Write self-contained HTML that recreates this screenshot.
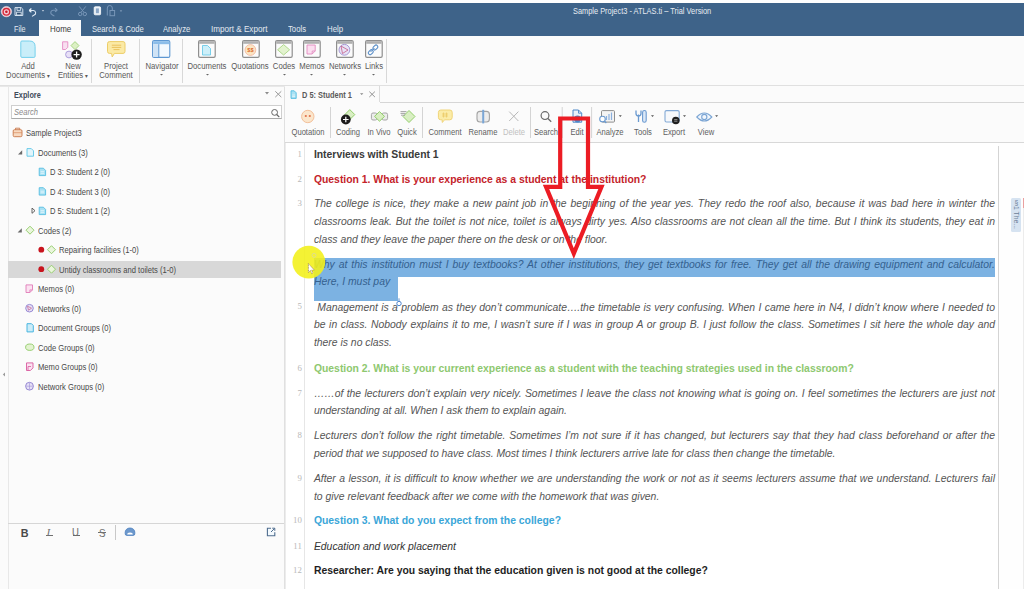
<!DOCTYPE html>
<html><head><meta charset="utf-8">
<style>
*{margin:0;padding:0;box-sizing:border-box}
html,body{width:1024px;height:589px;overflow:hidden;background:#fbfbfb;font-family:"Liberation Sans",sans-serif;position:relative}
.a{position:absolute}
svg.a{overflow:visible}
.t{position:absolute;white-space:pre;line-height:1}
.tab{color:#e3e9f0}
.rl{color:#585858}
.tr{color:#484848}
.tb{color:#505050}
.p{position:absolute;left:314px;width:681px;font-size:10.4px;white-space:nowrap;line-height:1}
.i{font-style:italic;color:#505050}
.j{text-align:justify;text-align-last:justify;white-space:normal}
</style></head><body>
<div class="a" style="left:0px;top:0px;width:1024px;height:3px;background:#fefefe"></div>
<div class="a" style="left:0px;top:3px;width:1024px;height:33px;background:#3e6389"></div>
<div class="a" style="left:39px;top:20px;width:42px;height:16px;background:#fbfbfb"></div>
<div class="t tab" style="left:13.80px;top:24.94px;font-size:8.4px;transform:scaleX(0.86);transform-origin:0 0;">File</div>
<div class="t tab" style="left:91.50px;top:24.94px;font-size:8.4px;transform:scaleX(0.913);transform-origin:0 0;">Search &amp; Code</div>
<div class="t tab" style="left:163.20px;top:24.94px;font-size:8.4px;transform:scaleX(0.914);transform-origin:0 0;">Analyze</div>
<div class="t tab" style="left:211.00px;top:24.94px;font-size:8.4px;transform:scaleX(0.97);transform-origin:0 0;">Import &amp; Export</div>
<div class="t tab" style="left:288.20px;top:24.94px;font-size:8.4px;transform:scaleX(0.92);transform-origin:0 0;">Tools</div>
<div class="t tab" style="left:326.70px;top:24.94px;font-size:8.4px;transform:scaleX(0.943);transform-origin:0 0;">Help</div>
<div class="t " style="left:49.80px;top:24.79px;font-size:8.6px;transform:scaleX(0.925);transform-origin:0 0;color:#383838">Home</div>
<div class="t " style="left:573.00px;top:8.49px;font-size:8.2px;transform:scaleX(0.905);transform-origin:0 0;color:#e8edf3">Sample Project3 - ATLAS.ti – Trial Version</div>
<svg class="a" style="left:0px;top:0px" width="130" height="20" viewBox="0 0 130 20">
<circle cx="6.4" cy="11.6" r="5.2" fill="#f2cdd6" stroke="#f7e6ea" stroke-width="0.6"/>
<circle cx="6.4" cy="11.8" r="3.3" fill="none" stroke="#d62a3c" stroke-width="1.4"/>
<circle cx="6.4" cy="11.8" r="1.3" fill="#c81828"/>
<path d="M15 7.6h6.2l1.6 1.6v6.3h-7.8z" fill="none" stroke="#d8e4f0" stroke-width="1"/>
<path d="M17 7.8v2.6h3.6V7.8" fill="none" stroke="#d8e4f0" stroke-width="0.9"/>
<rect x="16.6" y="12.2" width="4.6" height="2.8" fill="#2c4a6c" stroke="#d8e4f0" stroke-width="0.9"/>
<path d="M29.2 10.5 h4.2 a2.4 2.4 0 0 1 0.8 4.6 l-2.2 1.3" fill="none" stroke="#dfe9f4" stroke-width="1.1"/>
<path d="M29.2 10.5 l2.2 -2 M29.2 10.5 l2.2 1.7" fill="none" stroke="#e8f2fa" stroke-width="1.2"/>
<path d="M41.8 10.2 h2.4 l-1.2 1.3z" fill="#e0e9f3"/>
<path d="M57.2 10.2 h-4.2 a2.4 2.4 0 0 0 -0.8 4.6 l2.2 1.3" fill="none" stroke="#7896b8" stroke-width="1.1"/>
<path d="M57.2 10.2 l-2.2 -2 M57.2 10.2 l-2.2 1.7" fill="none" stroke="#7896b8" stroke-width="1.1"/>
<path d="M79.2 6.4 l4.8 6 M85.8 6.4 l-4.8 6" stroke="#7896b8" stroke-width="1"/>
<circle cx="80.2" cy="14" r="1.7" fill="none" stroke="#7896b8" stroke-width="1"/>
<circle cx="84.8" cy="14" r="1.7" fill="none" stroke="#7896b8" stroke-width="1"/>
<rect x="94.2" y="6.8" width="6.4" height="8" rx="1" fill="#e9f0f7" stroke="#fff" stroke-width="0.8"/>
<rect x="95.9" y="8.4" width="3" height="4.8" fill="#8aa6c6"/>
<path d="M107.3 15.5 V8 a2.5 2.5 0 0 1 5 0 V10" fill="none" stroke="#7896b8" stroke-width="1"/>
<rect x="110" y="10.5" width="4.6" height="5.2" fill="none" stroke="#7896b8" stroke-width="1"/>
<path d="M119.8 10.4 h2.4 l-1.2 1.3z" fill="#9fb5cf"/>
</svg>
<div class="a" style="left:0px;top:36px;width:1024px;height:49px;background:#fbfbfb"></div>
<div class="a" style="left:0px;top:85px;width:1024px;height:1px;background:#e0e0e0"></div>
<div class="a" style="left:91px;top:39px;width:1px;height:44px;background:#d8d8d8"></div>
<div class="a" style="left:139px;top:39px;width:1px;height:44px;background:#d8d8d8"></div>
<div class="a" style="left:182px;top:39px;width:1px;height:44px;background:#d8d8d8"></div>
<div class="a" style="left:386px;top:39px;width:1px;height:44px;background:#d8d8d8"></div>
<div class="t rl" style="left:-32.00px;top:61.54px;width:120px;text-align:center;font-size:8.4px;transform:scaleX(0.92);transform-origin:50% 0;">Add</div>
<div class="t rl" style="left:-32.00px;top:71.34px;width:120px;text-align:center;font-size:8.4px;transform:scaleX(0.92);transform-origin:50% 0;">Documents <span style="font-size:6px">▾</span></div>
<div class="t rl" style="left:12.50px;top:61.54px;width:120px;text-align:center;font-size:8.4px;transform:scaleX(0.92);transform-origin:50% 0;">New</div>
<div class="t rl" style="left:12.50px;top:71.34px;width:120px;text-align:center;font-size:8.4px;transform:scaleX(0.92);transform-origin:50% 0;">Entities <span style="font-size:6px">▾</span></div>
<div class="t rl" style="left:56.00px;top:61.54px;width:120px;text-align:center;font-size:8.4px;transform:scaleX(0.92);transform-origin:50% 0;">Project</div>
<div class="t rl" style="left:56.00px;top:71.34px;width:120px;text-align:center;font-size:8.4px;transform:scaleX(0.92);transform-origin:50% 0;">Comment</div>
<div class="t rl" style="left:101.50px;top:61.54px;width:120px;text-align:center;font-size:8.4px;transform:scaleX(0.92);transform-origin:50% 0;">Navigator</div>
<svg class="a" style="left:160.0px;top:74.3px" width="3" height="2" viewBox="0 0 3 2"><path d="M0 0h3l-1.5 1.6z" fill="#666"/></svg>
<div class="t rl" style="left:147.20px;top:61.54px;width:120px;text-align:center;font-size:8.4px;transform:scaleX(0.92);transform-origin:50% 0;">Documents</div>
<svg class="a" style="left:205.7px;top:74.3px" width="3" height="2" viewBox="0 0 3 2"><path d="M0 0h3l-1.5 1.6z" fill="#666"/></svg>
<div class="t rl" style="left:190.00px;top:61.54px;width:120px;text-align:center;font-size:8.4px;transform:scaleX(0.92);transform-origin:50% 0;">Quotations</div>
<div class="t rl" style="left:224.00px;top:61.54px;width:120px;text-align:center;font-size:8.4px;transform:scaleX(0.92);transform-origin:50% 0;">Codes</div>
<svg class="a" style="left:282.5px;top:74.3px" width="3" height="2" viewBox="0 0 3 2"><path d="M0 0h3l-1.5 1.6z" fill="#666"/></svg>
<div class="t rl" style="left:251.80px;top:61.54px;width:120px;text-align:center;font-size:8.4px;transform:scaleX(0.92);transform-origin:50% 0;">Memos</div>
<svg class="a" style="left:310.3px;top:74.3px" width="3" height="2" viewBox="0 0 3 2"><path d="M0 0h3l-1.5 1.6z" fill="#666"/></svg>
<div class="t rl" style="left:284.50px;top:61.54px;width:120px;text-align:center;font-size:8.4px;transform:scaleX(0.92);transform-origin:50% 0;">Networks</div>
<svg class="a" style="left:343.0px;top:74.3px" width="3" height="2" viewBox="0 0 3 2"><path d="M0 0h3l-1.5 1.6z" fill="#666"/></svg>
<div class="t rl" style="left:313.80px;top:61.54px;width:120px;text-align:center;font-size:8.4px;transform:scaleX(0.92);transform-origin:50% 0;">Links</div>
<svg class="a" style="left:372.3px;top:74.3px" width="3" height="2" viewBox="0 0 3 2"><path d="M0 0h3l-1.5 1.6z" fill="#666"/></svg>
<svg class="a" style="left:0px;top:0px" width="400" height="90" viewBox="0 0 400 90">
<!-- add documents -->
<path d="M22 41 h7.5 q5.6 0 5.6 5.6 v9.6 q0 1.2 -1.2 1.2 h-11.9 q-1.2 0 -1.2 -1.2 v-14 q0 -1.2 1.2 -1.2z" fill="#c9eef9" stroke="#74d0ec" stroke-width="1"/>
<!-- new entities -->
<path d="M62.6 41.8 h5.2 v5.5 l-2.2 2.2 h-3z" fill="#f8dff0" stroke="#e58ac4" stroke-width="0.9"/>
<path d="M75 41.6 l4 4 -4 4 -4 -4z" fill="#dcf0c4" stroke="#9fd07a" stroke-width="0.9"/>
<circle cx="69" cy="54.5" r="3.4" fill="#e8e0f6" stroke="#a596d8" stroke-width="0.9"/>
<circle cx="76.6" cy="54.6" r="5.2" fill="#1e1e1e"/>
<path d="M76.6 51.6 v6 M73.6 54.6 h6" stroke="#fff" stroke-width="1.3"/>
<!-- project comment -->
<path d="M109.5 41.6 h13.5 a2 2 0 0 1 2 2 v7.8 a2 2 0 0 1 -2 2 h-8.6 l-2.2 3.6 -.6 -3.6 h-2.1 a2 2 0 0 1 -2 -2 v-7.8 a2 2 0 0 1 2 -2z" fill="#fbeaa6" stroke="#eccd68" stroke-width="1"/>
<path d="M111.8 45.2 h9.4 M111.8 47.4 h9.4 M113.5 49.6 h6" stroke="#e6b84a" stroke-width="0.8"/>
<!-- navigator -->
<rect x="152.6" y="40.6" width="17.2" height="16.8" rx="1.5" fill="#f4f9fe" stroke="#5d97d2" stroke-width="1.1"/>
<rect x="153.2" y="41.2" width="16" height="3" fill="#8cbde9"/>
<rect x="153.2" y="44.2" width="5.5" height="12.6" fill="#cfe3f6"/>
<path d="M158.8 44.2 v13" stroke="#5d97d2" stroke-width="1"/>
<rect x="198.6" y="40.6" width="16.6" height="16.8" rx="1.4" fill="#fbfbfb" stroke="#8f8f8f" stroke-width="1.2"/>
<rect x="199.2" y="41.2" width="15.4" height="2.6" fill="#b0b0b0"/><path d="M202.5 45.5 h5 l3 3 v6.5 h-8z" fill="#cdeff9" stroke="#6ccbe8" stroke-width="0.9"/><rect x="242.6" y="40.6" width="16.6" height="16.8" rx="1.4" fill="#fbfbfb" stroke="#8f8f8f" stroke-width="1.2"/>
<rect x="243.2" y="41.2" width="15.4" height="2.6" fill="#b0b0b0"/><circle cx="250.4" cy="50" r="5.4" fill="#fbe6c4" stroke="#f2b49a" stroke-width="0.8"/><text x="250.4" y="52.2" font-size="5.6" text-anchor="middle" fill="#dc6a30" font-family="Liberation Sans" font-weight="bold">$$</text><rect x="275.6" y="40.6" width="16.6" height="16.8" rx="1.4" fill="#fbfbfb" stroke="#8f8f8f" stroke-width="1.2"/>
<rect x="276.2" y="41.2" width="15.4" height="2.6" fill="#b0b0b0"/><path d="M283.6 44.6 l6 5.2 -6 5.2 -6 -5.2z" fill="#e3f3cf" stroke="#a9d585" stroke-width="0.9"/><rect x="303.6" y="40.6" width="16.6" height="16.8" rx="1.4" fill="#fbfbfb" stroke="#8f8f8f" stroke-width="1.2"/>
<rect x="304.2" y="41.2" width="15.4" height="2.6" fill="#b0b0b0"/><path d="M307 45 h8.2 v6 l-3 3 h-5.2z" fill="#fbdff0" stroke="#e28bc0" stroke-width="0.9"/><path d="M312.2 54 v-3 h3" fill="none" stroke="#e28bc0" stroke-width="0.8"/><rect x="336.6" y="40.6" width="16.6" height="16.8" rx="1.4" fill="#fbfbfb" stroke="#8f8f8f" stroke-width="1.2"/>
<rect x="337.2" y="41.2" width="15.4" height="2.6" fill="#b0b0b0"/><circle cx="344.4" cy="49.8" r="5.4" fill="#e7e3f6" stroke="#9d8fd0" stroke-width="0.9"/><path d="M341 46 l1.5 7.5 M341 46 l7 4 M342.5 53.5 l5.5 -3.5" stroke="#c04a7a" stroke-width="0.7" fill="none"/><rect x="365.6" y="40.6" width="16.6" height="16.8" rx="1.4" fill="#fbfbfb" stroke="#8f8f8f" stroke-width="1.2"/>
<rect x="366.2" y="41.2" width="15.4" height="2.6" fill="#b0b0b0"/><path d="M370.5 52 l4 -4" stroke="#5b8fc8" stroke-width="1"/><rect x="369" y="49.5" width="3.6" height="5.5" rx="1.8" transform="rotate(45 370.8 52.2)" fill="none" stroke="#5b8fc8" stroke-width="1.1"/><rect x="373.6" y="44.8" width="3.6" height="5.5" rx="1.8" transform="rotate(45 375.4 47.5)" fill="none" stroke="#5b8fc8" stroke-width="1.1"/></svg>
<div class="a" style="left:8px;top:86px;width:277px;height:503px;background:#fbfbfb;border-left:1px solid #e8e8e8;border-right:1px solid #e0e0e0"></div>
<div class="a" style="left:0px;top:86px;width:1024px;height:1px;background:#e8e8e8"></div>
<div class="t " style="left:13.90px;top:91.44px;font-size:8.4px;transform:scaleX(0.87);transform-origin:0 0;font-weight:bold;color:#3f4b5a">Explore</div>
<svg class="a" style="left:265.4px;top:92.4px" width="4.2" height="3" viewBox="0 0 4.2 3"><path d="M0 0h4l-2 2.4z" fill="#8c8c8c"/></svg>
<svg class="a" style="left:274.6px;top:91.2px" width="7" height="6.5" viewBox="0 0 7 6.5"><path d="M0.3 0.3l6 5.8M6.3 0.3l-6 5.8" stroke="#999" stroke-width="1"/></svg>
<div class="a" style="left:11px;top:105px;width:271px;height:14px;background:#fff;border:1px solid #cfcfcf;border-bottom-color:#a9a9a9"></div>
<div class="t " style="left:14.30px;top:108.14px;font-size:8.4px;transform:scaleX(0.9);transform-origin:0 0;font-style:italic;color:#8a8a8a">Search</div>
<svg class="a" style="left:270.5px;top:109px" width="9" height="8" viewBox="0 0 9 8"><circle cx="3.6" cy="3.4" r="2.9" fill="none" stroke="#666" stroke-width="1"/><path d="M5.7 5.5l2.6 2.6" stroke="#666" stroke-width="1.2"/></svg>
<div class="a" style="left:8px;top:261px;width:273px;height:17px;background:#d8d8d8"></div>
<div class="t tr" style="left:25.60px;top:129.19px;font-size:8.6px;transform:scaleX(0.885);transform-origin:0 0;">Sample Project3</div>
<div class="t tr" style="left:37.80px;top:148.69px;font-size:8.6px;transform:scaleX(0.885);transform-origin:0 0;">Documents (3)</div>
<div class="t tr" style="left:50.00px;top:168.19px;font-size:8.6px;transform:scaleX(0.885);transform-origin:0 0;">D 3: Student 2 (0)</div>
<div class="t tr" style="left:50.00px;top:187.69px;font-size:8.6px;transform:scaleX(0.885);transform-origin:0 0;">D 4: Student 3 (0)</div>
<div class="t tr" style="left:50.00px;top:207.19px;font-size:8.6px;transform:scaleX(0.885);transform-origin:0 0;">D 5: Student 1 (2)</div>
<div class="t tr" style="left:37.80px;top:226.69px;font-size:8.6px;transform:scaleX(0.885);transform-origin:0 0;">Codes (2)</div>
<div class="t tr" style="left:59.30px;top:246.19px;font-size:8.6px;transform:scaleX(0.885);transform-origin:0 0;">Repairing facilities (1-0)</div>
<div class="t tr" style="left:59.30px;top:265.69px;font-size:8.6px;transform:scaleX(0.885);transform-origin:0 0;">Untidy classrooms and toilets (1-0)</div>
<div class="t tr" style="left:37.60px;top:285.19px;font-size:8.6px;transform:scaleX(0.885);transform-origin:0 0;">Memos (0)</div>
<div class="t tr" style="left:37.60px;top:304.69px;font-size:8.6px;transform:scaleX(0.885);transform-origin:0 0;">Networks (0)</div>
<div class="t tr" style="left:37.60px;top:324.19px;font-size:8.6px;transform:scaleX(0.885);transform-origin:0 0;">Document Groups (0)</div>
<div class="t tr" style="left:37.60px;top:343.69px;font-size:8.6px;transform:scaleX(0.885);transform-origin:0 0;">Code Groups (0)</div>
<div class="t tr" style="left:37.60px;top:363.19px;font-size:8.6px;transform:scaleX(0.885);transform-origin:0 0;">Memo Groups (0)</div>
<div class="t tr" style="left:37.60px;top:382.69px;font-size:8.6px;transform:scaleX(0.885);transform-origin:0 0;">Network Groups (0)</div>
<svg class="a" style="left:0px;top:0px" width="290" height="589" viewBox="0 0 290 589"><rect x="13.2" y="129.7" width="8.8" height="7" rx="1.2" fill="#f7d9c0" stroke="#c8774a" stroke-width="0.9"/><path d="M15.5 129.7v-1.5h4.2v1.5" fill="none" stroke="#c8774a" stroke-width="0.9"/><path d="M13.2 132.7h8.8" stroke="#d88a5a" stroke-width="0.7"/><path d="M22.2 150.2 v4.2 h-4.2z" fill="#6a6a6a"/><path d="M21.8 228.2 v4.2 h-4.2z" fill="#6a6a6a"/><path d="M32 208.1 l3 2.6 -3 2.6z" fill="none" stroke="#555" stroke-width="0.9"/><path d="M27 148.6 h4.3 l2.2 2.2 v5.4 h-6.5z" fill="#e2f5fb" stroke="#5ec6e6" stroke-width="0.9"/><path d="M39.2 168.2 h4.2 l2.2 2.2 v5.2 h-6.4z" fill="#a9e1f3" stroke="#45b8de" stroke-width="0.8"/><path d="M40.6 171.7 h3.6 M40.6 173.29999999999998 h3.6" stroke="#fff" stroke-width="0.6"/><path d="M39.2 187.7 h4.2 l2.2 2.2 v5.2 h-6.4z" fill="#a9e1f3" stroke="#45b8de" stroke-width="0.8"/><path d="M40.6 191.2 h3.6 M40.6 192.79999999999998 h3.6" stroke="#fff" stroke-width="0.6"/><path d="M39.2 207.2 h4.2 l2.2 2.2 v5.2 h-6.4z" fill="#a9e1f3" stroke="#45b8de" stroke-width="0.8"/><path d="M40.6 210.7 h3.6 M40.6 212.29999999999998 h3.6" stroke="#fff" stroke-width="0.6"/><path d="M30 226.2 l4 4 -4 4 -4 -4z" fill="#eaf6dc" stroke="#8fca66" stroke-width="0.9"/><circle cx="41.3" cy="249.7" r="2.9" fill="#c8141e"/><path d="M51.5 245.7 l4 4 -4 4 -4 -4z" fill="#eaf6dc" stroke="#8fca66" stroke-width="0.9"/><circle cx="41.3" cy="269.20000000000005" r="2.9" fill="#c8141e"/><path d="M51.5 265.20000000000005 l4 4 -4 4 -4 -4z" fill="#eaf6dc" stroke="#8fca66" stroke-width="0.9"/><path d="M26 284.90000000000003 h6.5 v5 l-2.6 2.6 h-3.9z" fill="#fbe2f1" stroke="#e07bb8" stroke-width="0.9"/><path d="M29.9 292.50000000000006 v-2.6 h2.6" fill="none" stroke="#e07bb8" stroke-width="0.8"/><circle cx="29.5" cy="308.20000000000005" r="3.8" fill="#e6e1f5" stroke="#8d7fcf" stroke-width="0.9"/><path d="M27.5 306.20000000000005 l4 2 -3 2z" fill="none" stroke="#c04a80" stroke-width="0.6"/><path d="M27 323.70000000000005 h4.5 l1.8 1.8 v6.4 h-6.3z" fill="#ccecf8" stroke="#48b6e0" stroke-width="1" stroke-linejoin="round"/><ellipse cx="29.8" cy="347.20000000000005" rx="4.2" ry="3.2" fill="#e3f3d0" stroke="#8fca66" stroke-width="0.9"/><path d="M26.5 362.90000000000003 h6.5 v5 l-2.6 2.6 h-3.9z" fill="#fbe2f1" stroke="#d95a9f" stroke-width="0.9"/><path d="M28 370.50000000000006 v-4 h3" fill="none" stroke="#d95a9f" stroke-width="0.8"/><circle cx="29.5" cy="386.20000000000005" r="3.9" fill="#e6e1f5" stroke="#8d7fcf" stroke-width="0.9"/><path d="M26.2 386.20000000000005 h6.6 M29.5 382.70000000000005 v7" stroke="#a090d8" stroke-width="0.6"/><path d="M5 372.4 v4 l-2.2 -2z" fill="#9a9a9a"/></svg>
<div class="a" style="left:8px;top:523px;width:276px;height:1px;background:#d6d6d6"></div>
<div class="a" style="left:115px;top:525px;width:1px;height:15px;background:#c8c8c8"></div>
<div class="t " style="left:20.80px;top:527.95px;font-size:10.8px;font-weight:bold;color:#4a4a4a">B</div>
<div class="t " style="left:46.50px;top:527.26px;font-size:11.2px;font-family:Liberation Serif;font-style:italic;color:#707070">I</div>
<div class="a" style="left:46px;top:535px;width:6.5px;height:0.9px;background:#707070"></div>
<div class="t " style="left:72.20px;top:526.70px;font-size:10.6px;transform:scaleX(0.9);transform-origin:0 0;color:#6a6a6a">U</div>
<div class="a" style="left:72.5px;top:535.2px;width:7px;height:0.9px;background:#6a6a6a"></div>
<div class="t " style="left:98.60px;top:527.95px;font-size:10.8px;transform:scaleX(0.9);transform-origin:0 0;color:#707070">S</div>
<div class="a" style="left:98px;top:531.6px;width:8px;height:0.8px;background:#707070"></div>
<svg class="a" style="left:124px;top:527px" width="12" height="10" viewBox="0 0 12 10"><path d="M1.2 5.2 a4.8 4.2 0 0 1 9.6 0 v1.6 a1.6 1.6 0 0 1 -1.6 1.6 h-6.4 a1.6 1.6 0 0 1 -1.6 -1.6z" fill="#6c98cc" stroke="#4a7fbf" stroke-width="0.8"/><path d="M3.2 7.6 a2.8 2.2 0 0 1 5.6 0z" fill="#fff"/></svg>
<svg class="a" style="left:266px;top:527px" width="10" height="10" viewBox="0 0 10 10"><path d="M5 1.3h-3.6v7.4h7.4v-3.4" fill="#f4fafe" stroke="#4f6d8f" stroke-width="1.1"/><path d="M5 5 l3.6 -3.6 M6.2 1.2 h2.6 v2.6" fill="none" stroke="#4f6d8f" stroke-width="1"/></svg>
<div class="a" style="left:285px;top:86px;width:739px;height:57px;background:#fbfbfb"></div>
<div class="a" style="left:285px;top:86px;width:95px;height:16px;background:#fbfbfb;border-right:1px solid #dcdcdc"></div>
<div class="a" style="left:380px;top:101.5px;width:644px;height:1px;background:#d6d6d6"></div>
<div class="a" style="left:285px;top:142px;width:739px;height:1px;background:#d8d8d8"></div>
<div class="t " style="left:302.20px;top:91.34px;font-size:8.4px;transform:scaleX(0.885);transform-origin:0 0;font-weight:bold;color:#5a5a5a">D 5: Student 1</div>
<svg class="a" style="left:0px;top:0px" width="800" height="145" viewBox="0 0 800 145"><path d="M291 90.8 h3.2 l2 2 v5.6 h-5.2z" fill="#a9e1f3" stroke="#45b8de" stroke-width="0.8"/><path d="M292.2 95 h3 M292.2 96.6 h3" stroke="#fff" stroke-width="0.6"/><path d="M360 93.3 h3.4 l-1.7 1.8z" fill="#888"/><path d="M369.3 91.6 l5.6 5.4 M374.9 91.6 l-5.6 5.4" stroke="#8a8a8a" stroke-width="0.9"/><path d="M330.5 107 v31" stroke="#d4d4d4" stroke-width="1"/><path d="M422.5 107 v31" stroke="#d4d4d4" stroke-width="1"/><path d="M530.5 107 v31" stroke="#d4d4d4" stroke-width="1"/><path d="M562.2 107 v31" stroke="#d4d4d4" stroke-width="1"/><path d="M591.6 107 v31" stroke="#d4d4d4" stroke-width="1"/><circle cx="307.8" cy="116.5" r="6.2" fill="#fbe6cc" stroke="#f3c09a" stroke-width="1"/><circle cx="305.8" cy="116" r="1.1" fill="#e0704a"/><circle cx="309.8" cy="116" r="1.1" fill="#e0704a"/><path d="M349.8 109.6 l5 5 -5 5 -5 -5z" fill="#d9efc3" stroke="#94cf6d" stroke-width="1"/><circle cx="345.8" cy="119.5" r="4.9" fill="#1c1c1c"/><path d="M345.8 116.7 v5.6 M343 119.5 h5.6" stroke="#fff" stroke-width="1.2"/><rect x="371.4" y="113" width="5.6" height="7" rx="1.6" fill="#ececec" stroke="#a6a6a6" stroke-width="1"/><rect x="382" y="113" width="5.6" height="7" rx="1.6" fill="#ececec" stroke="#a6a6a6" stroke-width="1"/><path d="M379.5 111.6 l5 4.8 -5 4.8 -5 -4.8z" fill="#d9efc3" stroke="#94cf6d" stroke-width="1"/><path d="M409 110.5 l6 6 -6 6 -6 -6z" fill="#d9efc3" stroke="#94cf6d" stroke-width="1"/><path d="M400.5 111.6 h6 M400.5 113.4 h5 M401 115.2 h4" stroke="#9a9a9a" stroke-width="0.9"/><path d="M440.8 110 h9 a2.4 2.4 0 0 1 2.4 2.4 v5 a2.4 2.4 0 0 1 -2.4 2.4 h-5 l-2.6 2.6 v-2.6 h-1.4 a2.4 2.4 0 0 1 -2.4 -2.4 v-5 a2.4 2.4 0 0 1 2.4 -2.4z" fill="#fbeca8" stroke="#f0d478" stroke-width="1"/><path d="M443.5 112.5 v5 M446.5 112.5 v5 M442 114 h6 M442 116 h6" stroke="#e8c458" stroke-width="0.6"/><rect x="477" y="111.4" width="12.4" height="10.6" rx="3" fill="#ececec" stroke="#a4a4a4" stroke-width="1.1"/><path d="M483.2 109.8 v13.6" stroke="#7aa6d6" stroke-width="2"/><path d="M509.2 111.6 l9.2 9.4 M518.4 111.6 l-9.2 9.4" stroke="#b8b8b8" stroke-width="1"/><circle cx="545" cy="115.6" r="3.9" fill="none" stroke="#6a6a6a" stroke-width="1.2"/><path d="M547.9 118.5 l3.3 3.3" stroke="#6a6a6a" stroke-width="1.3"/><path d="M573 110 h5.5 l3.2 3.2 v9 h-8.7z" fill="#eaf2fb" stroke="#4d88c9" stroke-width="1"/><path d="M578.5 110 v3.2 h3.2" fill="none" stroke="#4d88c9" stroke-width="0.9"/><circle cx="577.5" cy="119" r="3.4" fill="#4d88c9"/><rect x="601.5" y="110.6" width="13" height="11.5" rx="1" fill="#f4f4f4" stroke="#8e8e8e" stroke-width="1"/><path d="M606.5 120 v-4 M609 120 v-6 M611.5 120 v-7.5" stroke="#8ab0de" stroke-width="1.2"/><circle cx="602.5" cy="119" r="2.8" fill="#fff" stroke="#6b9ad0" stroke-width="1.1"/><path d="M604.3 121 l2 2" stroke="#6b9ad0" stroke-width="1.2"/><path d="M618.8 115.3 h3 l-1.5 1.6z" fill="#555"/><path d="M636 110.5 v3 a2.5 2.5 0 0 0 5 0 v-3 M638.5 114.5 v7.5" fill="none" stroke="#6b9ad0" stroke-width="1.3"/><rect x="642.6" y="110.5" width="3.6" height="11.8" rx="1.8" fill="#dbe8f7" stroke="#6b9ad0" stroke-width="1.1"/><path d="M651 115.3 h3 l-1.5 1.6z" fill="#555"/><rect x="665" y="110.6" width="14.2" height="11.4" rx="1.5" fill="#f6f8fb" stroke="#84aad6" stroke-width="1.1"/><circle cx="675.8" cy="120.5" r="3.8" fill="#1f1f1f"/><path d="M674.2 119.6 h3.2 M674.2 121.2 h3.2" stroke="#ddd" stroke-width="0.6"/><path d="M683 115.3 h3 l-1.5 1.6z" fill="#555"/><path d="M696.8 117 q7.5 -8 15 0 q-7.5 8 -15 0z" fill="#f1f6fc" stroke="#7ba5d4" stroke-width="1.1"/><circle cx="704.3" cy="117" r="2.6" fill="none" stroke="#7ba5d4" stroke-width="1.1"/><path d="M715.1 115.3 h3 l-1.5 1.6z" fill="#555"/></svg>
<div class="t " style="left:248.10px;top:128.34px;width:120px;text-align:center;font-size:8.4px;transform:scaleX(0.91);transform-origin:50% 0;color:#5e5e5e">Quotation</div>
<div class="t " style="left:288.40px;top:128.34px;width:120px;text-align:center;font-size:8.4px;transform:scaleX(0.91);transform-origin:50% 0;color:#5e5e5e">Coding</div>
<div class="t " style="left:319.30px;top:128.34px;width:120px;text-align:center;font-size:8.4px;transform:scaleX(0.91);transform-origin:50% 0;color:#5e5e5e">In Vivo</div>
<div class="t " style="left:347.40px;top:128.34px;width:120px;text-align:center;font-size:8.4px;transform:scaleX(0.91);transform-origin:50% 0;color:#5e5e5e">Quick</div>
<div class="t " style="left:384.90px;top:128.34px;width:120px;text-align:center;font-size:8.4px;transform:scaleX(0.91);transform-origin:50% 0;color:#5e5e5e">Comment</div>
<div class="t " style="left:423.00px;top:128.34px;width:120px;text-align:center;font-size:8.4px;transform:scaleX(0.91);transform-origin:50% 0;color:#5e5e5e">Rename</div>
<div class="t " style="left:454.10px;top:128.34px;width:120px;text-align:center;font-size:8.4px;transform:scaleX(0.91);transform-origin:50% 0;color:#c0c0c0">Delete</div>
<div class="t " style="left:485.60px;top:128.34px;width:120px;text-align:center;font-size:8.4px;transform:scaleX(0.91);transform-origin:50% 0;color:#5e5e5e">Search</div>
<div class="t " style="left:517.00px;top:128.34px;width:120px;text-align:center;font-size:8.4px;transform:scaleX(0.91);transform-origin:50% 0;color:#5e5e5e">Edit</div>
<div class="t " style="left:550.00px;top:128.34px;width:120px;text-align:center;font-size:8.4px;transform:scaleX(0.91);transform-origin:50% 0;color:#5e5e5e">Analyze</div>
<div class="t " style="left:582.60px;top:128.34px;width:120px;text-align:center;font-size:8.4px;transform:scaleX(0.91);transform-origin:50% 0;color:#5e5e5e">Tools</div>
<div class="t " style="left:613.90px;top:128.34px;width:120px;text-align:center;font-size:8.4px;transform:scaleX(0.91);transform-origin:50% 0;color:#5e5e5e">Export</div>
<div class="t " style="left:646.20px;top:128.34px;width:120px;text-align:center;font-size:8.4px;transform:scaleX(0.91);transform-origin:50% 0;color:#5e5e5e">View</div>
<div class="a" style="left:998px;top:143px;width:26px;height:446px;background:#fefefe"></div>
<div class="a" style="left:998px;top:146px;width:1px;height:443px;background:#d4d4d4"></div>
<div class="a" style="left:1011px;top:197.6px;width:10px;height:34.4px;background:#d6e3f1;border-radius:1.5px"></div>
<div class="t" style="left:1012px;top:199px;width:9px;height:32px;writing-mode:vertical-rl;font-size:6.8px;color:#6c8098;line-height:9px">§1 The...</div>
<div class="a" style="left:1022.5px;top:197.6px;width:1.5px;height:10px;background:#eaa0a0"></div>
<div class="a" style="left:1023px;top:207.6px;width:1px;height:382px;background:#ececec"></div>
<div class="a" style="left:285px;top:143px;width:713px;height:446px;background:#ffffff"></div>
<div class="a" style="left:304px;top:143px;width:1px;height:446px;background:#e6e6e6"></div>
<div class="a" style="left:285px;top:143px;width:1px;height:446px;background:#ececec"></div>
<div class="a" style="left:313.9px;top:258.2px;width:680.8px;height:18.4px;background:#7cb2e2"></div>
<div class="a" style="left:313.9px;top:276.5px;width:84.4px;height:24.5px;background:#7cb2e2"></div>
<div class="t" style="left:313.9px;top:149.95px;width:681.1px;font-size:10.4px;font-weight:bold;color:#3a3a3a;">Interviews with Student 1</div>
<div class="t" style="left:313.9px;top:174.85px;width:681.1px;font-size:10.4px;font-weight:bold;color:#c4232b;">Question 1. What is your experience as a student at the institution?</div>
<div class="t" style="left:313.9px;top:199.05px;width:681.1px;font-size:10.4px;text-align:justify;text-align-last:justify;white-space:nowrap;font-style:italic;color:#555;">The college is nice, they make a new paint job in the beginning of the year yes. They redo the roof also, because it was bad here in winter the</div>
<div class="t" style="left:313.9px;top:217.25px;width:681.1px;font-size:10.4px;text-align:justify;text-align-last:justify;white-space:nowrap;font-style:italic;color:#555;">classrooms leak. But the toilet is not nice, toilet is always dirty yes. Also classrooms are not clean all the time. But I think its students, they eat in</div>
<div class="t" style="left:313.9px;top:234.55px;width:681.1px;font-size:10.4px;font-style:italic;color:#555;">class and they leave the paper there on the desk or on the floor.</div>
<div class="t" style="left:313.9px;top:259.65px;width:681.1px;font-size:10.4px;text-align:justify;text-align-last:justify;white-space:nowrap;font-style:italic;color:#35618f;">Why at this institution must I buy textbooks? At other institutions, they get textbooks for free. They get all the drawing equipment and calculator.</div>
<div class="t" style="left:313.9px;top:277.35px;width:681.1px;font-size:10.4px;font-style:italic;color:#35618f;">Here, I must pay</div>
<div class="t" style="left:313.9px;top:302.55px;width:681.1px;font-size:10.4px;text-align:justify;text-align-last:justify;white-space:nowrap;font-style:italic;color:#555;">&nbsp;Management is a problem as they don’t communicate….the timetable is very confusing. When I came here in N4, I didn’t know where I needed to</div>
<div class="t" style="left:313.9px;top:320.35px;width:681.1px;font-size:10.4px;text-align:justify;text-align-last:justify;white-space:nowrap;font-style:italic;color:#555;">be in class. Nobody explains it to me, I wasn’t sure if I was in group A or group B. I just follow the class. Sometimes I sit here the whole day and</div>
<div class="t" style="left:313.9px;top:338.05px;width:681.1px;font-size:10.4px;font-style:italic;color:#555;">there is no class.</div>
<div class="t" style="left:313.9px;top:364.05px;width:681.1px;font-size:10.4px;font-weight:bold;color:#8ec86f;">Question 2. What is your current experience as a student with the teaching strategies used in the classroom?</div>
<div class="t" style="left:313.9px;top:388.65px;width:681.1px;font-size:10.4px;text-align:justify;text-align-last:justify;white-space:nowrap;font-style:italic;color:#555;">……of the lecturers don’t explain very nicely. Sometimes I leave the class not knowing what is going on. I feel sometimes the lecturers are just not</div>
<div class="t" style="left:313.9px;top:406.05px;width:681.1px;font-size:10.4px;font-style:italic;color:#555;">understanding at all. When I ask them to explain again.</div>
<div class="t" style="left:313.9px;top:431.25px;width:681.1px;font-size:10.4px;text-align:justify;text-align-last:justify;white-space:nowrap;font-style:italic;color:#555;">Lecturers don’t follow the right timetable. Sometimes I’m not sure if it has changed, but lecturers say that they had class beforehand or after the</div>
<div class="t" style="left:313.9px;top:449.05px;width:681.1px;font-size:10.4px;font-style:italic;color:#555;">period that we supposed to have class. Most times I think lecturers arrive late for class then change the timetable.</div>
<div class="t" style="left:313.9px;top:474.05px;width:681.1px;font-size:10.4px;text-align:justify;text-align-last:justify;white-space:nowrap;font-style:italic;color:#555;">After a lesson, it is difficult to know whether we are understanding the work or not as it seems lecturers assume that we understand. Lecturers fail</div>
<div class="t" style="left:313.9px;top:491.55px;width:681.1px;font-size:10.4px;font-style:italic;color:#555;">to give relevant feedback after we come with the homework that was given.</div>
<div class="t" style="left:313.9px;top:516.25px;width:681.1px;font-size:10.4px;font-weight:bold;color:#3aa6d8;">Question 3. What do you expect from the college?</div>
<div class="t" style="left:313.9px;top:541.85px;width:681.1px;font-size:10.4px;font-style:italic;color:#333;">Education and work placement</div>
<div class="t" style="left:313.9px;top:566.25px;width:681.1px;font-size:10.4px;font-weight:bold;color:#1e1e1e;">Researcher: Are you saying that the education given is not good at the college?</div>
<div class="t" style="left:281.8px;top:149.84px;width:20px;text-align:right;font-size:8.8px;font-family:Liberation Serif;color:#b8b8b8">1</div>
<div class="t" style="left:281.8px;top:174.74px;width:20px;text-align:right;font-size:8.8px;font-family:Liberation Serif;color:#b8b8b8">2</div>
<div class="t" style="left:281.8px;top:198.94px;width:20px;text-align:right;font-size:8.8px;font-family:Liberation Serif;color:#b8b8b8">3</div>
<div class="t" style="left:281.8px;top:302.44px;width:20px;text-align:right;font-size:8.8px;font-family:Liberation Serif;color:#b8b8b8">5</div>
<div class="t" style="left:281.8px;top:363.94px;width:20px;text-align:right;font-size:8.8px;font-family:Liberation Serif;color:#b8b8b8">6</div>
<div class="t" style="left:281.8px;top:388.54px;width:20px;text-align:right;font-size:8.8px;font-family:Liberation Serif;color:#b8b8b8">7</div>
<div class="t" style="left:281.8px;top:431.14px;width:20px;text-align:right;font-size:8.8px;font-family:Liberation Serif;color:#b8b8b8">8</div>
<div class="t" style="left:281.8px;top:473.94px;width:20px;text-align:right;font-size:8.8px;font-family:Liberation Serif;color:#b8b8b8">9</div>
<div class="t" style="left:281.8px;top:516.14px;width:20px;text-align:right;font-size:8.8px;font-family:Liberation Serif;color:#b8b8b8">10</div>
<div class="t" style="left:281.8px;top:541.74px;width:20px;text-align:right;font-size:8.8px;font-family:Liberation Serif;color:#b8b8b8">11</div>
<div class="t" style="left:281.8px;top:566.14px;width:20px;text-align:right;font-size:8.8px;font-family:Liberation Serif;color:#b8b8b8">12</div>
<svg class="a" style="left:0px;top:0px" width="1024" height="589" viewBox="0 0 1024 589"><circle cx="308.8" cy="262.1" r="16.4" fill="#f2f018" fill-opacity="0.88"/><circle cx="314" cy="255.3" r="2" fill="none" stroke="#d9d9a0" stroke-width="0.8"/><circle cx="399" cy="303.5" r="2.2" fill="none" stroke="#3c78c8" stroke-width="0.9"/><path d="M399 301.3 v-3" stroke="#3c78c8" stroke-width="0.8"/><path d="M308.4 263.6 v9 l2 -2 1.4 3 1.2 -.6 -1.4 -2.9 h2.8z" fill="#fff" stroke="#8a6a50" stroke-width="0.7" stroke-dasharray="1 0.6"/><path d="M560.2 118.5 H588 V186.8 H601.5 L573.8 253.5 L546 186.8 H560.2 Z" fill="none" stroke="#ec1c24" stroke-width="4.2" stroke-linejoin="miter"/></svg>
</body></html>
